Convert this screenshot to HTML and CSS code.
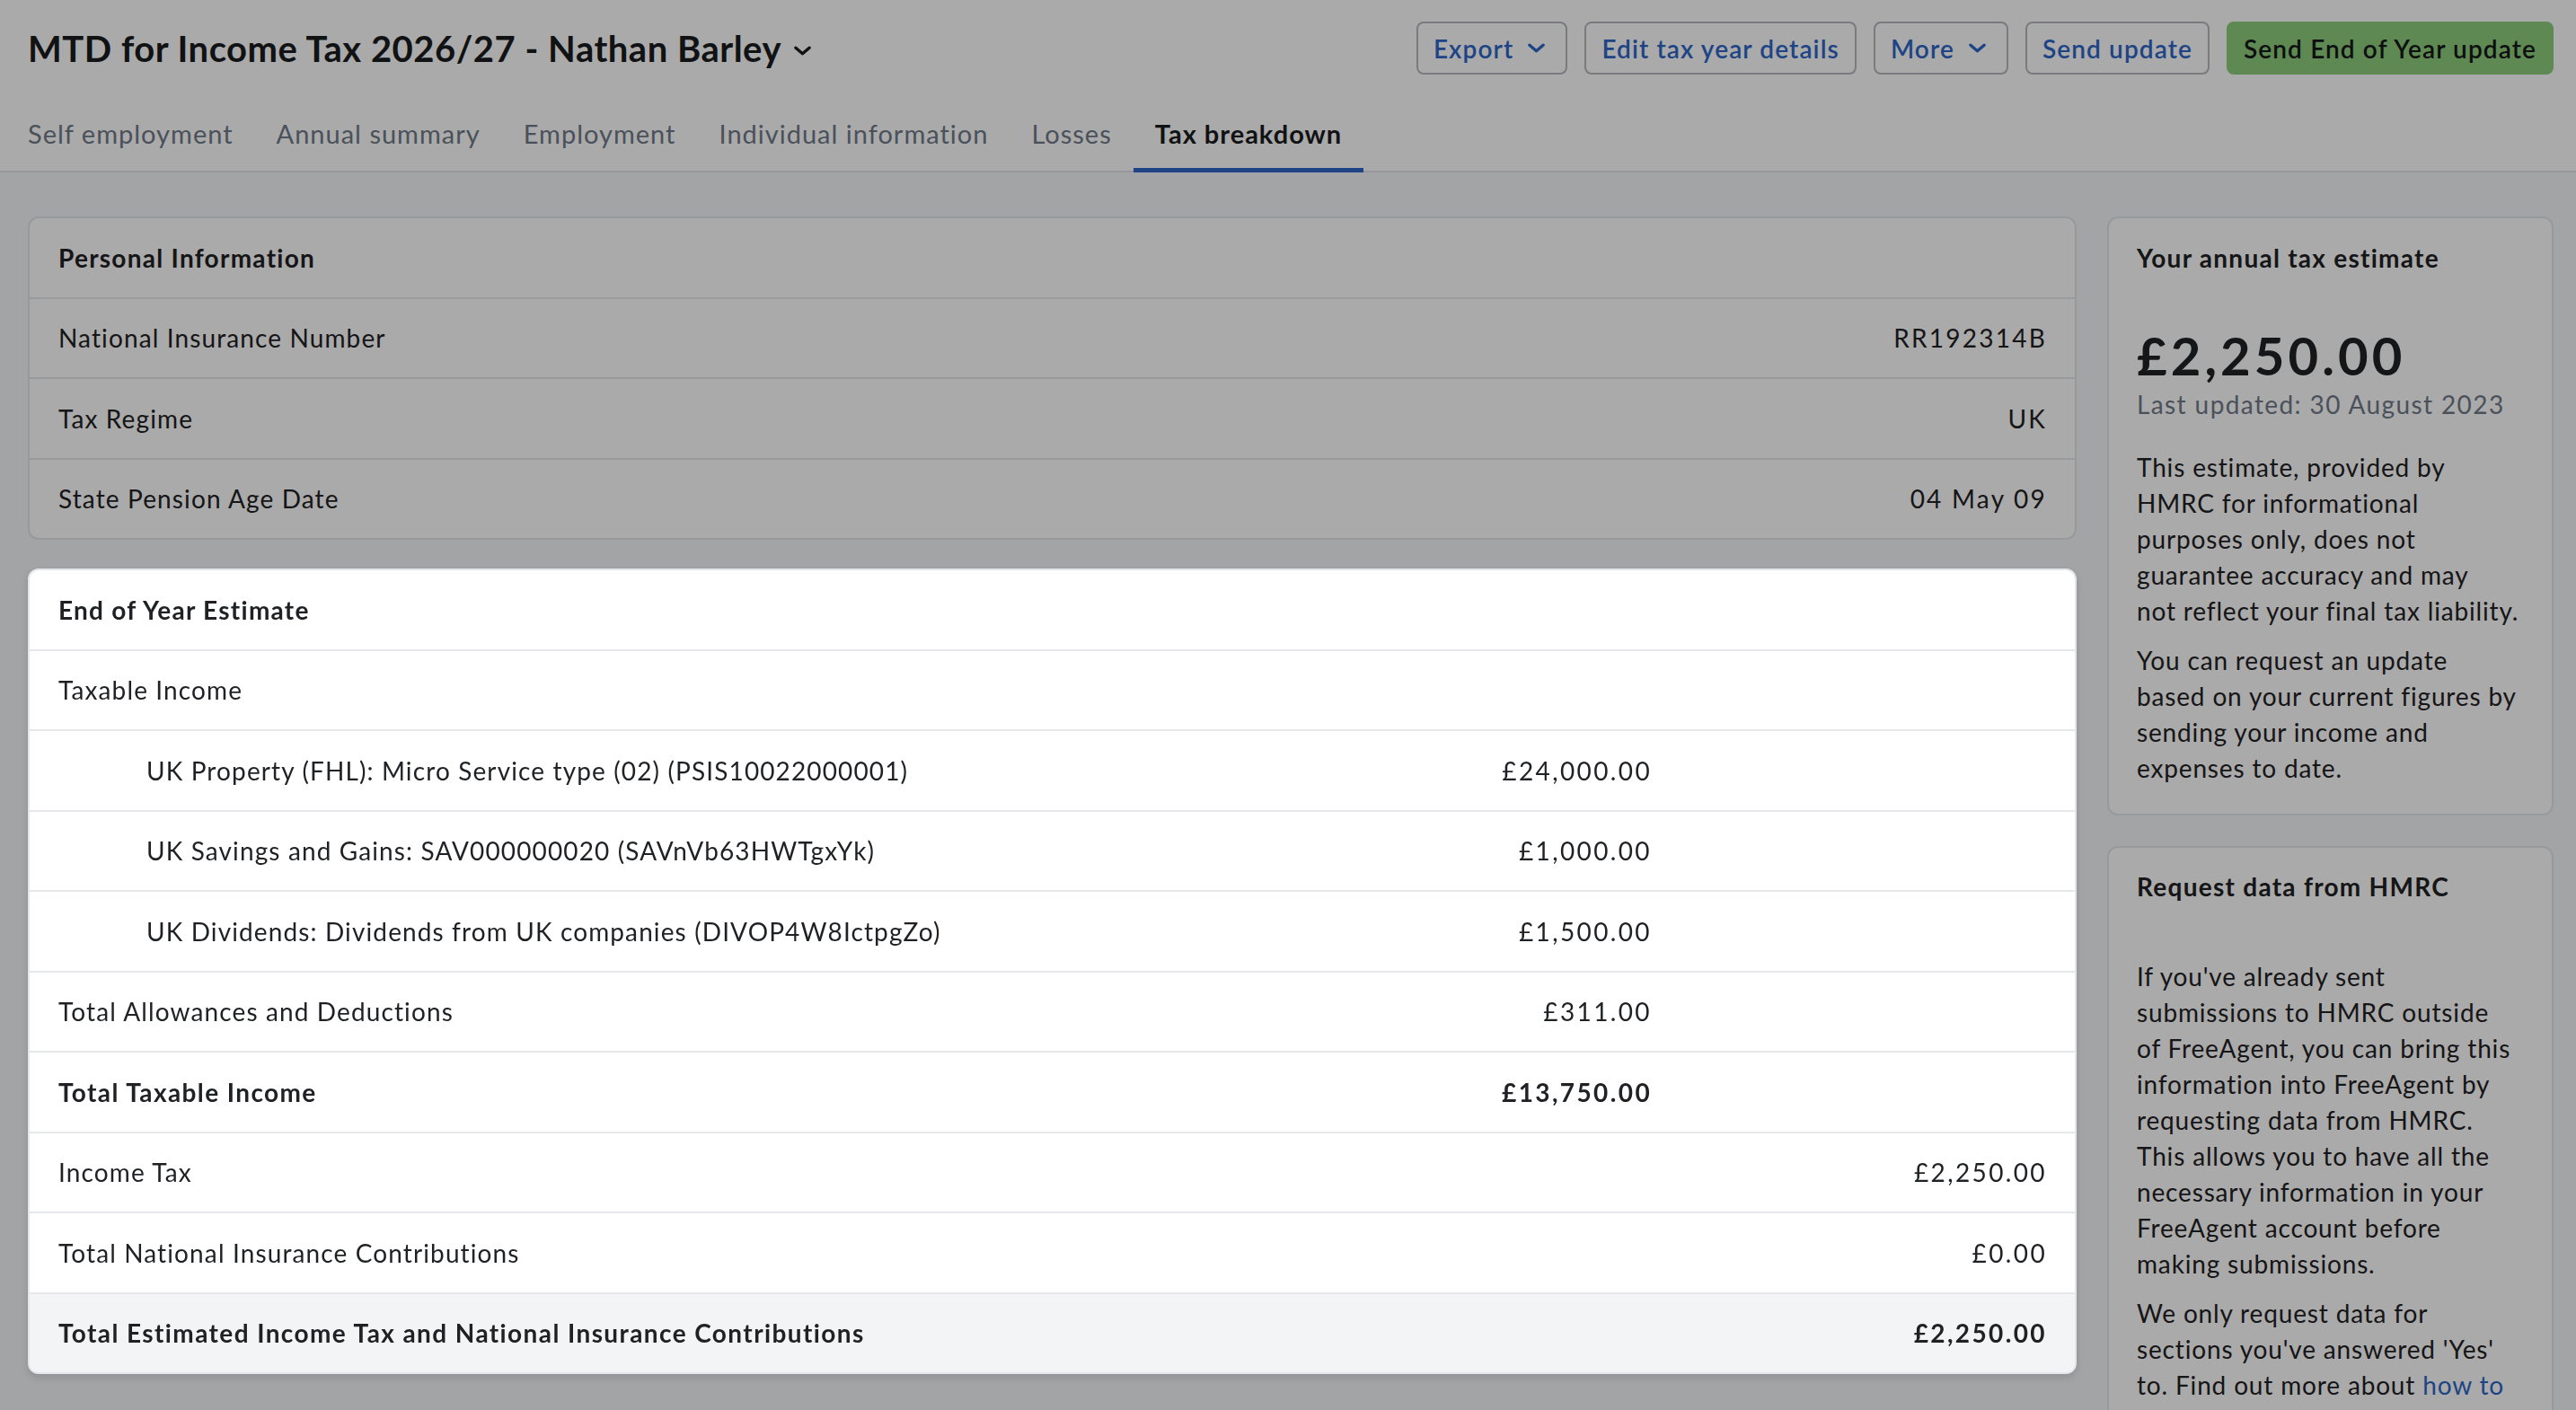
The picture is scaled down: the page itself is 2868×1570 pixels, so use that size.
FILE: index.html
```html
<!DOCTYPE html>
<html lang="en">
<head>
<meta charset="utf-8">
<title>MTD for Income Tax 2026/27 - Tax breakdown</title>
<link rel="stylesheet" href="styles.css">
</head>
<body>
<header class="page-header">
  <div class="title-row">
    <h1 class="title">MTD for Income Tax 2026/27 - Nathan Barley
      <svg class="chev chev-title" viewBox="0 0 20 11" aria-hidden="true"><path d="M2 2l8 7 8-7"/></svg>
    </h1>
    <div class="actions">
      <button class="btn">Export <svg class="chev" viewBox="0 0 20 11" aria-hidden="true"><path d="M2 2l8 7 8-7"/></svg></button>
      <button class="btn">Edit tax year details</button>
      <button class="btn">More <svg class="chev" viewBox="0 0 20 11" aria-hidden="true"><path d="M2 2l8 7 8-7"/></svg></button>
      <button class="btn">Send update</button>
      <button class="btn btn-primary">Send End of Year update</button>
    </div>
  </div>
  <nav class="tabs">
    <a class="tab">Self employment</a>
    <a class="tab">Annual summary</a>
    <a class="tab">Employment</a>
    <a class="tab">Individual information</a>
    <a class="tab">Losses</a>
    <a class="tab active">Tax breakdown</a>
  </nav>
</header>

<main class="layout">
  <div class="main-col">
    <section class="card">
      <div class="row row-head">Personal Information</div>
      <div class="row"><span>National Insurance Number</span><span class="val">RR192314B</span></div>
      <div class="row"><span>Tax Regime</span><span class="val">UK</span></div>
      <div class="row"><span>State Pension Age Date</span><span class="val">04 May 09</span></div>
    </section>

    <section class="card card-spotlight">
      <div class="trow row-head"><span>End of Year Estimate</span><span></span><span></span></div>
      <div class="trow"><span>Taxable Income</span><span></span><span></span></div>
      <div class="trow indent"><span>UK Property (FHL): Micro Service type (02) (PSIS10022000001)</span><span class="num">£24,000.00</span><span></span></div>
      <div class="trow indent"><span>UK Savings and Gains: SAV000000020 (SAVnVb63HWTgxYk)</span><span class="num">£1,000.00</span><span></span></div>
      <div class="trow indent"><span>UK Dividends: Dividends from UK companies (DIVOP4W8IctpgZo)</span><span class="num">£1,500.00</span><span></span></div>
      <div class="trow"><span>Total Allowances and Deductions</span><span class="num">£311.00</span><span></span></div>
      <div class="trow strong"><span>Total Taxable Income</span><span class="num">£13,750.00</span><span></span></div>
      <div class="trow"><span>Income Tax</span><span></span><span class="num">£2,250.00</span></div>
      <div class="trow"><span>Total National Insurance Contributions</span><span></span><span class="num">£0.00</span></div>
      <div class="trow strong total"><span>Total Estimated Income Tax and National Insurance Contributions</span><span></span><span class="num">£2,250.00</span></div>
    </section>
  </div>

  <aside class="sidebar">
    <section class="card side-card">
      <div class="row row-head">Your annual tax estimate</div>
      <div class="side-body">
        <div class="big-amount">£2,250.00</div>
        <div class="muted">Last updated: 30 August 2023</div>
        <p>This estimate, provided by<br>HMRC for informational<br>purposes only, does not<br>guarantee accuracy and may<br>not reflect your final tax liability.</p>
        <p>You can request an update<br>based on your current figures by<br>sending your income and<br>expenses to date.</p>
      </div>
    </section>
    <section class="card side-card">
      <div class="row row-head">Request data from HMRC</div>
      <div class="side-body">
        <p class="first">If you've already sent<br>submissions to HMRC outside<br>of FreeAgent, you can bring this<br>information into FreeAgent by<br>requesting data from HMRC.<br>This allows you to have all the<br>necessary information in your<br>FreeAgent account before<br>making submissions.</p>
        <p>We only request data for<br>sections you've answered 'Yes'<br>to. Find out more about <a class="link">how to<br>request data from HMRC</a>.</p>
      </div>
    </section>
  </aside>
</main>

<div class="backdrop"></div>
</body>
</html>
```

FILE: styles.css
```css
* {
  box-sizing: border-box;
}

html,
body {
  margin: 0;
}

body {
  font-family: Lato, "Noto Sans", sans-serif;
  font-size: 28px;
  letter-spacing: 0.04em;
  color: #1f2124;
  background: #f4f6fa;
}

/* ---------- header ---------- */
.page-header {
  background: #fff;
  padding: 24px 25px 0 31px;
  border-bottom: 2px solid #e0e3e8;
}

.title-row {
  display: flex;
  justify-content: space-between;
  align-items: center;
  height: 59px;
}

.title {
  margin: 0;
  font-size: 40px;
  font-weight: 700;
  letter-spacing: 0.5px;
  display: flex;
  align-items: center;
  gap: 14px;
  color: #1a1b1d;
}

.chev {
  width: 19px;
  height: 11px;
  flex: none;
  fill: none;
  stroke: currentColor;
  stroke-width: 3.5;
  stroke-linecap: round;
  stroke-linejoin: round;
}

.chev-title {
  margin-top: 6px;
}

.actions {
  display: flex;
  gap: 19px;
}

.btn {
  height: 59px;
  padding: 0 17px;
  border: 2px solid #b6b9bf;
  border-radius: 8px;
  background: #fff;
  color: #2e67c8;
  font-family: Lato, "Noto Sans", sans-serif;
  font-size: 28px;
  font-weight: 600;
  letter-spacing: 0.04em;
  display: flex;
  align-items: center;
  gap: 16px;
}

.btn .chev {
  margin-right: 6px;
}

.btn-primary {
  background: #8dce7b;
  border-color: #8dce7b;
  color: #161718;
}

.tabs {
  display: flex;
  margin: 27px 0 -2px -24px;
}

.tab {
  padding: 0 24px;
  height: 82px;
  display: flex;
  align-items: center;
  border-bottom: 5px solid transparent;
  color: #6f7a88;
  font-size: 29px;
  letter-spacing: 1px;
}

.tab.active {
  border-bottom-color: #2e67c8;
  color: #1a1b1d;
  font-weight: 700;
}

/* ---------- layout ---------- */
.layout {
  display: flex;
  align-items: flex-start;
  gap: 34px;
  padding: 49px 25px 0 31px;
}

.main-col {
  flex: 1;
  display: flex;
  flex-direction: column;
  gap: 32px;
}

.sidebar {
  width: 497px;
  display: flex;
  flex-direction: column;
  gap: 34px;
}

.card {
  background: #fff;
  border: 2px solid #e3e6eb;
  border-radius: 12px;
  overflow: hidden;
}

.row,
.trow {
  height: 89.5px;
  padding: 0 31px 0 32px;
  border-top: 2px solid #e5e7eb;
  display: flex;
  align-items: center;
  justify-content: space-between;
}

.row:first-child,
.trow:first-child {
  height: 87.5px;
  border-top: 0;
}

.row-head {
  font-weight: 700;
  letter-spacing: 0.045em;
}

.val {
  letter-spacing: 0.08em;
}

/* ---------- estimate table ---------- */
.card-spotlight {
  position: relative;
  z-index: 20;
  box-shadow: 0 4px 8px rgba(0, 0, 0, 0.12);
}

.trow {
  display: grid;
  grid-template-columns: 1fr 440px 440px;
}

.trow .num {
  text-align: right;
  letter-spacing: 0.085em;
}

.trow.indent > span:first-child {
  padding-left: 98px;
}

.trow.strong {
  font-weight: 700;
  letter-spacing: 0.05em;
}

.trow.total {
  background: #f3f4f6;
}

/* ---------- sidebar ---------- */
.side-card .row {
  padding: 0 31px;
}

.side-body {
  padding: 31px 31px 31px;
  line-height: 40px;
  letter-spacing: 0.03em;
}

.big-amount {
  font-size: 58px;
  font-weight: 700;
  line-height: 68px;
  letter-spacing: 0.07em;
}

.muted {
  color: #6f7a88;
  letter-spacing: 0.05em;
}

.side-body p {
  margin: 15px 0 0;
  white-space: nowrap;
}

.side-body .muted + p {
  margin-top: 30px;
}

.side-body p.first {
  margin-top: 5px;
}

.link {
  color: #2e67c8;
}

/* ---------- dimmed backdrop ---------- */
.backdrop {
  position: fixed;
  inset: 0;
  background: rgba(0, 0, 0, 0.333);
  z-index: 10;
}
```
